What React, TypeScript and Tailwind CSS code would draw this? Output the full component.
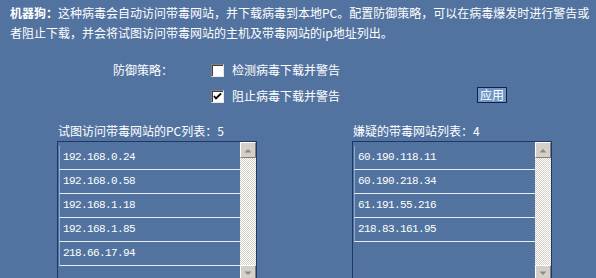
import React from "react";

const leftItems = ["192.168.0.24", "192.168.0.58", "192.168.1.18", "192.168.1.85", "218.66.17.94"];
const rightItems = ["60.190.118.11", "60.190.218.34", "61.191.55.216", "218.83.161.95"];

function Checkbox({ checked }: { checked: boolean }) {
  return (
    <div className="w-[13px] h-[13px] bg-white border-t border-l border-t-[#808080] border-l-[#808080] border-b border-r border-b-[#e8e8e8] border-r-[#e8e8e8] shadow-[inset_1px_1px_0_#404040] flex items-center justify-center">
      {checked && (
        <svg width="9" height="9" viewBox="0 0 9 9">
          <path d="M1 4 L3 6.5 L8 1.5" stroke="#000" strokeWidth="1.8" fill="none" />
        </svg>
      )}
    </div>
  );
}

function ScrollBtn({ up }: { up: boolean }) {
  return (
    <div className="w-[16px] h-[16px] bg-[#d4d0c8] border-t border-l border-t-white border-l-white border-b border-r border-b-[#808080] border-r-[#808080] flex items-center justify-center">
      <svg width="8" height="5" viewBox="0 0 8 5">
        {up ? <path d="M0.5 4.5 L4 1 L7.5 4.5 Z" fill="#8a8a8a" /> : <path d="M0.5 0.5 L4 4 L7.5 0.5 Z" fill="#8a8a8a" />}
      </svg>
    </div>
  );
}

function ListBox({ items }: { items: string[] }) {
  return (
    <div className="w-[200px] h-[141px] border border-[#1d3766] flex bg-[#52739f]">
      <div className="flex-1 pt-[4px] pl-[1px]">
        {items.map((it) => (
          <div
            key={it}
            className="h-[24px] border-b border-b-[#e6ecf3] border-l border-l-[#8ea7c6] flex items-center pl-[3px] text-white text-[11px] tracking-[-0.6px]"
            style={{ fontFamily: '"Liberation Mono", monospace' }}
          >
            {it}
          </div>
        ))}
      </div>
      <div className="w-[16px] flex flex-col">
        <ScrollBtn up />
        <div className="flex-1 bg-[repeating-conic-gradient(#ffffff_0_25%,#d4d0c8_0_50%)] bg-[length:2px_2px]" />
        <ScrollBtn up={false} />
      </div>
    </div>
  );
}

export default function App() {
  return (
    <div
      className="w-[596px] h-[278px] overflow-hidden bg-[#52739f] text-white text-[12px]"
      style={{ fontFamily: '"Noto Sans CJK SC", "Noto Sans", sans-serif' }}
    >
      <div className="pt-[3px] pl-[10px] leading-[20px] whitespace-nowrap">
        <div>
          <span className="font-bold">机器狗：</span>这种病毒会自动访问带毒网站，并下载病毒到本地PC。配置防御策略，可以在病毒爆发时进行警告或
        </div>
        <div>者阻止下载，并会将试图访问带毒网站的主机及带毒网站的ip地址列出。</div>
      </div>
      <div className="mt-[14px] h-[26px] flex items-center">
        <div className="ml-[113px] w-[98px]">防御策略：</div>
        <Checkbox checked={false} />
        <div className="ml-[8px]">检测病毒下载并警告</div>
      </div>
      <div className="h-[26px] flex items-center">
        <div className="ml-[211px]">
          <Checkbox checked />
        </div>
        <div className="ml-[8px] w-[245px]">阻止病毒下载并警告</div>
        <div className="w-[30px] h-[16px] mt-[-2px] bg-[#6f95c2] border border-[#0d2450] flex items-center justify-center leading-none text-[12px]">
          应用
        </div>
      </div>
      <div className="mt-[14px] h-[16px] flex items-center">
        <div className="ml-[58px] w-[295px]">试图访问带毒网站的PC列表：5</div>
        <div>嫌疑的带毒网站列表：4</div>
      </div>
      <div className="mt-[2px] flex">
        <div className="ml-[57px]">
          <ListBox items={leftItems} />
        </div>
        <div className="ml-[95px]">
          <ListBox items={rightItems} />
        </div>
      </div>
    </div>
  );
}
